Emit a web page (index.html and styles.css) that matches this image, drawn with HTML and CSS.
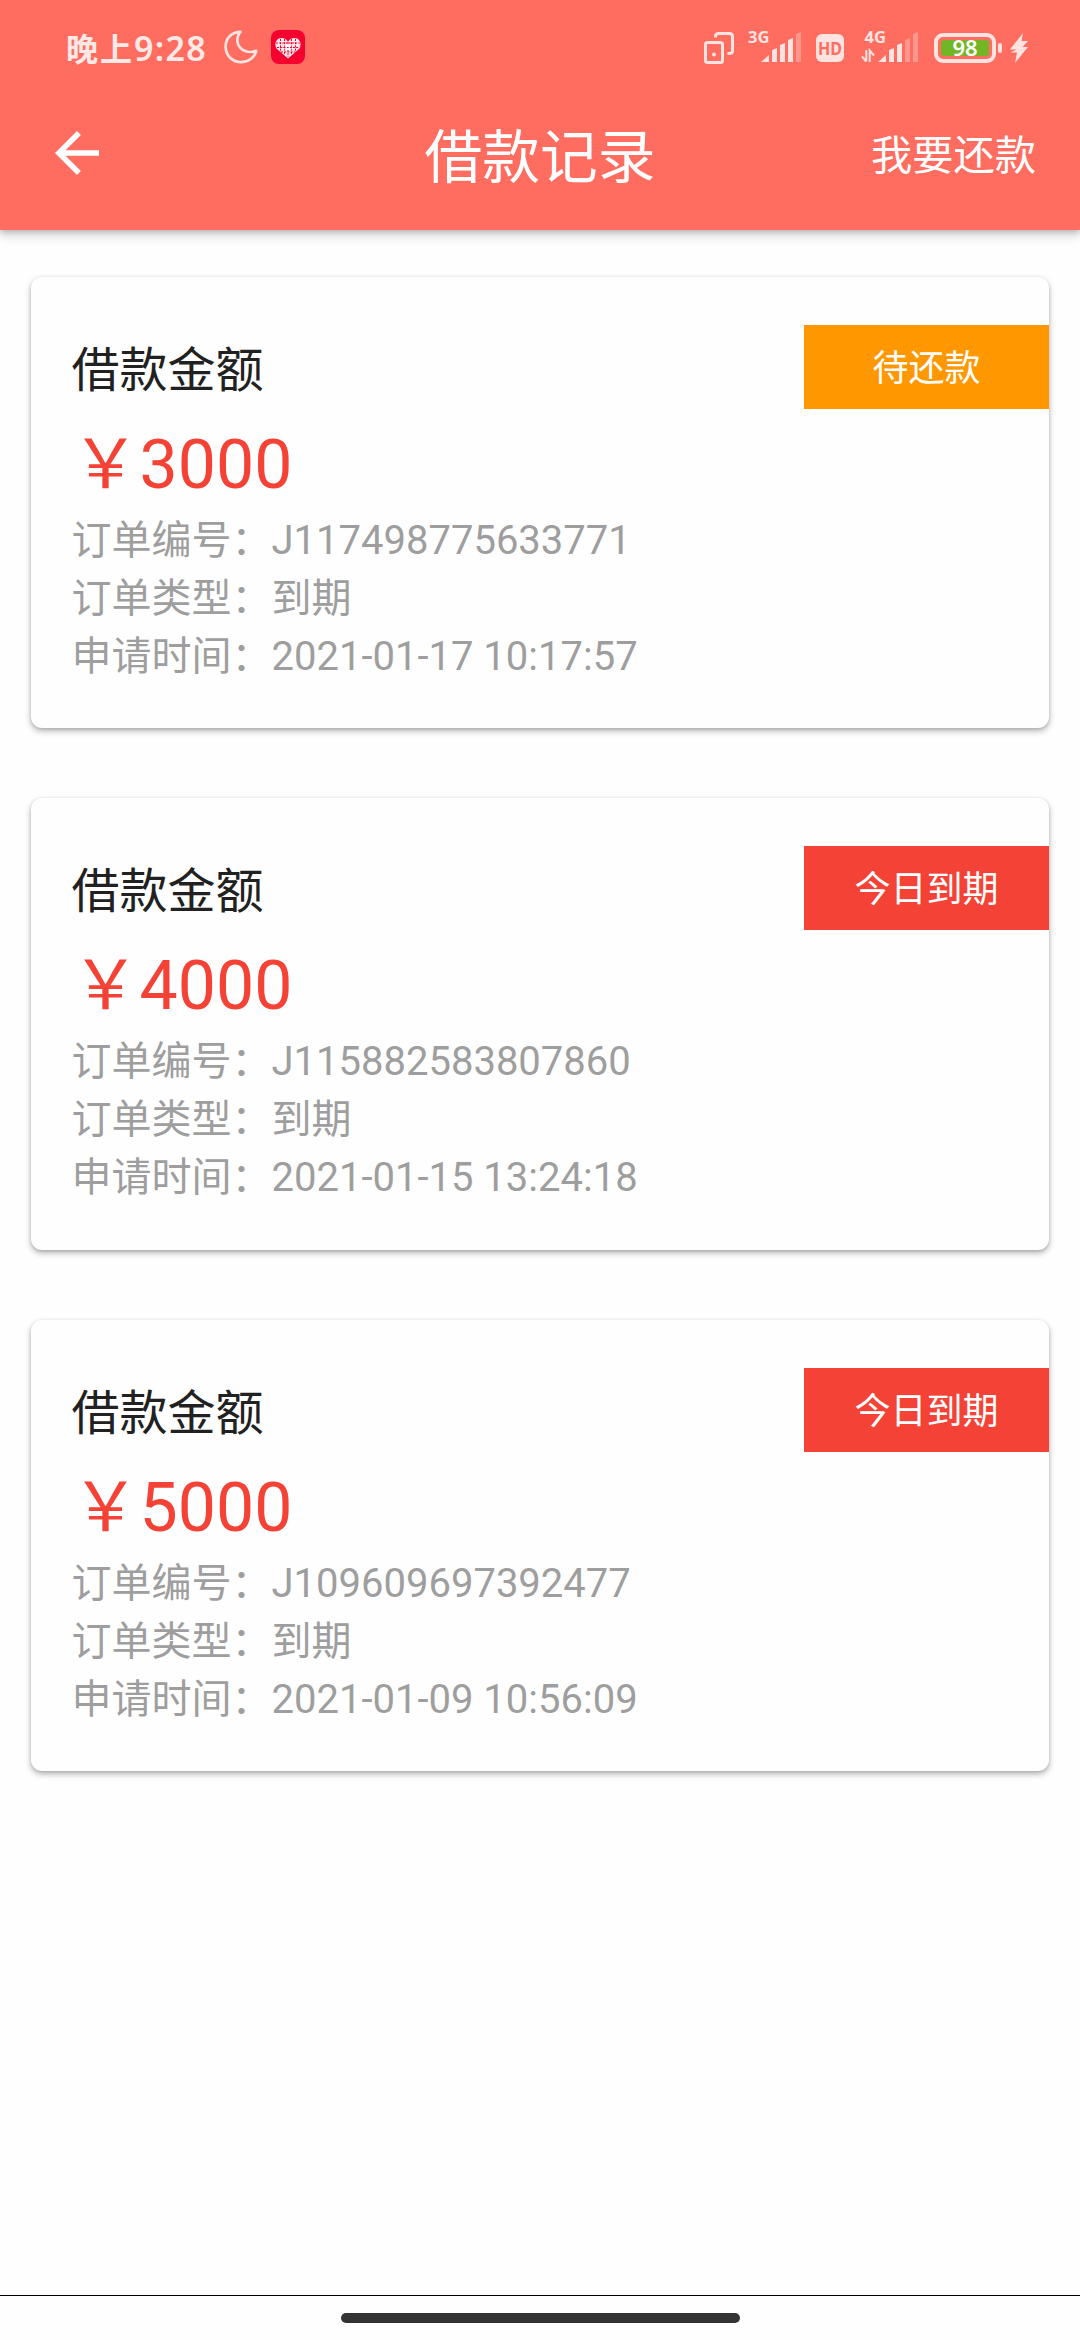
FILE: index.html
```html
<!DOCTYPE html>
<html lang="zh-CN">
<head>
<meta charset="utf-8">
<title>借款记录</title>
<link rel="stylesheet" href="styles.css">
</head>
<body>
<header class="header">
  <div class="status">
    <span class="time"><span class="time-cn">晚上</span>9:28</span>
    <svg class="moon" width="34" height="34" viewBox="0 0 34 34"><path d="M16.500 1.800C7.500 2 1.600 8.600 1.600 16.500C1.600 25.500 8.500 32.200 17.200 32.200C24.500 32.200 30.500 27.500 32.200 20.800C22.500 24.500 12.500 18.500 13.400 8.500C13.600 6 14.700 3.500 16.500 1.800Z" fill="none" stroke="#ffe3e0" stroke-width="2.700" stroke-linejoin="round"/></svg>
    <svg class="app" width="34" height="34" viewBox="0 0 34 34">
      <rect width="34" height="34" rx="8" fill="#f5002f"/>
      <path d="M17 28.500L5.500 18.500C2.500 13 6 8 10.500 8C13.500 8 16 9.500 17 12C18 9.500 20.500 8 23.500 8C28 8 31.500 13 28.500 18.500Z" fill="#ffe4e8"/>
      <path d="M9.500 9v13M13.500 9v16M20.500 9v16M24.500 9v13M5 13h24M6 17.500h22M10 22h14M17 12v3M17 20v7" stroke="#f5002f" stroke-width="1" stroke-dasharray="2 1.200" fill="none"/>
      <path d="M15.500 14v7M18.500 14v7M13.500 16h7M13.500 19h7" stroke="#fff" stroke-width="1"/>
    </svg>
    <div class="status-right">
      <svg width="30" height="32" viewBox="0 0 30 32" fill="none" stroke="#ffe3e0" stroke-width="3"><path d="M11.500 5.500V4.500Q11.500 1.500 14.500 1.500H25.500Q28.500 1.500 28.500 4.500V18.500Q28.500 21.500 25.500 21.500H23.500"/><rect x="1.500" y="10.500" width="17" height="20" rx="2"/><circle cx="10" cy="22.500" r="2" fill="#ffe3e0" stroke="none"/></svg>
      <svg class="sig3" width="54" height="42" viewBox="0 -8 54 42"><text class="net" x="0" y="12.500">3G</text><path d="M13 32L21 25V32ZM24 20l5-2v14h-5ZM32 15l5-2v19h-5ZM40 10l5-2v24h-5Z" fill="#ffe3e0"/><path d="M48 4l5-2v30h-5Z" fill="#ff968d"/></svg>
      <svg class="hd" width="28" height="28" viewBox="0 0 28 28"><rect width="28" height="28" rx="6" fill="#ffe3e0"/><text class="hd-text" x="2" y="21" textLength="24" lengthAdjust="spacingAndGlyphs">HD</text></svg>
      <svg class="sig4" width="58" height="42" viewBox="0 -8 58 42"><text class="net" x="3.500" y="12.500">4G</text><path d="M5.300 20v11M1 26.500l4.300 5M8.700 32V20.500l4.300 5" fill="none" stroke="#ffe3e0" stroke-width="2"/><path d="M17 32L25 25V32ZM28 20l5-2v14h-5ZM36 15l5-2v19h-5Z" fill="#ffe3e0"/><path d="M44 10l5-2v24h-5ZM52 4l5-2v30h-5Z" fill="#ff968d"/></svg>
      <svg class="battery" width="69" height="30" viewBox="0 0 69 30"><rect x="2" y="2" width="58" height="26" rx="7" fill="none" stroke="#ffe3e0" stroke-width="4"/><rect x="7" y="7" width="48" height="16" rx="3" fill="#72b626"/><rect x="64" y="10" width="4" height="10" rx="2" fill="#ffe3e0"/><text class="percent" x="31" y="23" text-anchor="middle">98</text></svg>
      <svg class="bolt" width="18" height="30" viewBox="0 0 18 30"><path d="M13 0L0 16.500H6.500L0.500 19.500H7L5 30L18 14H12.500L18 8H11.500Z" fill="#ffe3e0"/></svg>
    </div>
  </div>
  <div class="appbar">
    <svg class="back" width="66" height="66" viewBox="0 0 24 24"><path d="M20 11H7.830l5.590-5.590L12 4l-8 8 8 8 1.410-1.410L7.830 13H20v-2z" fill="#fff"/></svg>
    <h1 class="title">借款记录</h1>
    <span class="action">我要还款</span>
  </div>
</header>
<main class="list">
  <section class="card">
    <div class="info">
      <h2 class="label">借款金额</h2>
      <div class="amount">￥3000</div>
      <div class="row">订单编号：J117498775633771</div>
      <div class="row">订单类型：到期</div>
      <div class="row">申请时间：2021-01-17 10:17:57</div>
    </div>
    <div class="badge badge-pending">待还款</div>
  </section>
  <section class="card">
    <div class="info">
      <h2 class="label">借款金额</h2>
      <div class="amount">￥4000</div>
      <div class="row">订单编号：J115882583807860</div>
      <div class="row">订单类型：到期</div>
      <div class="row">申请时间：2021-01-15 13:24:18</div>
    </div>
    <div class="badge badge-due">今日到期</div>
  </section>
  <section class="card">
    <div class="info">
      <h2 class="label">借款金额</h2>
      <div class="amount">￥5000</div>
      <div class="row">订单编号：J109609697392477</div>
      <div class="row">订单类型：到期</div>
      <div class="row">申请时间：2021-01-09 10:56:09</div>
    </div>
    <div class="badge badge-due">今日到期</div>
  </section>
</main>
<footer class="nav"><div class="pill"></div></footer>
</body>
</html>
```
FILE: styles.css
```css
* { box-sizing: border-box; }
body {
  margin: 0;
  width: 1080px;
  height: 2340px;
  overflow: hidden;
  display: flex;
  flex-direction: column;
  background: #fefefe;
  font-family: Roboto, "Noto Sans CJK SC", sans-serif;
}
svg { display: block; flex: none; }
.header {
  height: 230px;
  flex: none;
  background: #ff6d60;
  box-shadow: 0 5px 11px rgba(0, 0, 0, .18), 0 2px 5px rgba(0, 0, 0, .16);
}
.status {
  height: 80px;
  display: flex;
  padding: 0 50px 0 66px;
}
.time {
  width: 158px;
  margin-top: 25px;
  font: 600 34px/44px "Noto Sans", "Noto Sans CJK SC", sans-serif;
  letter-spacing: 1.3px;
  color: #ffe9e6;
  white-space: nowrap;
}
.time-cn {
  font-family: "Noto Sans CJK SC", sans-serif;
  font-size: 32px;
  font-weight: 700;
  letter-spacing: 2px;
}
.moon { margin-top: 30px; }
.app { margin: 30px 0 0 13px; }
.status-right {
  margin: 32px 2px 0 auto;
  display: flex;
}
.sig3 { margin: -10px 0 0 14px; }
.hd { margin: 2px 0 0 14px; }
.sig4 { margin: -10px 0 0 17px; }
.battery { margin: 1px 0 0 15px; }
.bolt { margin: 1px 0 0 7px; }
.net { font: 700 16.500px "Noto Sans", sans-serif; fill: #ffe3e0; }
.hd-text { font: 700 18px "Noto Sans", sans-serif; fill: #ff6d60; }
.percent { font: 600 22px "Noto Sans", sans-serif; fill: #fff; }
.appbar {
  height: 150px;
  display: grid;
  grid-template-columns: 300px 1fr 300px;
  padding: 0 44px;
}
.back { margin-top: 40px; }
.title {
  margin: 36px 0 0;
  font-size: 57.750px;
  line-height: 84px;
  font-weight: 400;
  color: #fff;
  text-align: center;
}
.action {
  margin-top: 46px;
  font-size: 41.250px;
  line-height: 60px;
  color: #fff;
  text-align: right;
}
.list {
  flex: 1;
  display: flex;
  flex-direction: column;
  gap: 69.700px;
  padding: 46.800px 31px 0;
}
.card {
  height: 451.700px;
  flex: none;
  display: flex;
  justify-content: space-between;
  background: #fefefe;
  border-radius: 11px;
  box-shadow: 0 3px 6px rgba(0, 0, 0, .3), 0 1px 3px rgba(0, 0, 0, .1);
}
.info { padding: 58px 0 0 40.500px; }
.label {
  margin: 0;
  font-size: 48px;
  line-height: 72px;
  font-weight: 400;
  color: #212121;
}
.amount {
  height: 105px;
  padding-top: 6px;
  font-size: 68px;
  line-height: 104px;
  color: #f44336;
}
.row {
  height: 58px;
  font-size: 40px;
  line-height: 58px;
  color: #9e9e9e;
  white-space: nowrap;
}
.badge {
  width: 245px;
  height: 84px;
  margin-top: 48px;
  padding-top: 2px;
  font-size: 36px;
  line-height: 84px;
  color: #fff;
  text-align: center;
}
.badge-pending { background: #ff9800; }
.badge-due { background: #f44336; }
.nav {
  height: 45px;
  flex: none;
  border-top: 1px solid #000;
  padding-top: 17px;
}
.pill {
  width: 399px;
  height: 10px;
  margin: 0 auto;
  border-radius: 5px;
  background: #333;
}
```
